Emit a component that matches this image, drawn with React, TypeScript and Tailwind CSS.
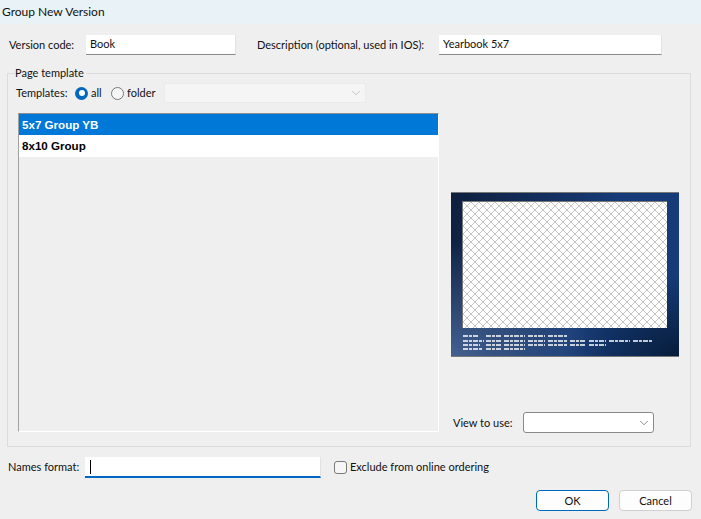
import React from 'react';
import { ChevronDown } from 'lucide-react';

const FONT = "font-['Lato','Open_Sans',sans-serif]";

// fine print under the sample photo: [x, y, width] dashes
const captionLines = [
  [0, 0, 16], [23, 0, 15], [41, 0, 21], [65, 0, 17], [85, 0, 19],
  [0, 5, 21], [23, 5, 15], [41, 5, 21], [65, 5, 17], [85, 5, 19], [107, 5, 16], [126, 5, 17], [146, 5, 21], [170, 5, 19],
  [0, 9, 17], [23, 9, 15], [41, 9, 21], [65, 9, 17], [85, 9, 19], [107, 9, 16], [126, 9, 17],
  [0, 13, 20], [23, 13, 15], [41, 13, 21],
];

function TemplatePreview() {
  return (
    <svg width="228" height="165" viewBox="0 0 228 165" className="block">
      <defs>
        <linearGradient id="bgBase" x1="0" y1="0" x2="1" y2="0.25">
          <stop offset="0" stopColor="#0e1f3e" />
          <stop offset="0.7" stopColor="#163b78" />
          <stop offset="1" stopColor="#163b78" />
        </linearGradient>
        <radialGradient id="glow" cx="0" cy="1" r="0.7">
          <stop offset="0" stopColor="#43608f" />
          <stop offset="1" stopColor="#43608f" stopOpacity="0" />
        </radialGradient>
        <radialGradient id="shade" cx="1" cy="1" r="0.5">
          <stop offset="0" stopColor="#071c3a" />
          <stop offset="1" stopColor="#071c3a" stopOpacity="0" />
        </radialGradient>
        <pattern id="checker" width="8" height="8" patternUnits="userSpaceOnUse" x="12" y="10">
          <rect width="8" height="8" fill="#ffffff" />
          <path d="M0 0L8 8M8 0L0 8" stroke="#c6c6c6" strokeWidth="1" />
        </pattern>
      </defs>
      <rect width="228" height="165" fill="url(#bgBase)" />
      <rect width="228" height="165" fill="url(#glow)" />
      <rect width="228" height="165" fill="url(#shade)" />
      <rect y="0" width="228" height="1" fill="#777777" />
      <rect y="164" width="228" height="1" fill="#777777" />
      <rect x="11" y="9" width="205" height="127" fill="url(#checker)" />
      <rect x="11" y="9" width="205" height="1" fill="#777777" />
      <rect x="11" y="9" width="1" height="127" fill="#777777" />
      <g stroke="#ffffff" strokeWidth="1.5" strokeDasharray="5 1 3 1">
        {captionLines.map(([x, y, w], i) => (
          <line key={i} x1={12 + x} y1={144 + y} x2={12 + x + w} y2={144 + y} />
        ))}
      </g>
    </svg>
  );
}

function TextBox({ value, className }: { value: string; className: string }) {
  return (
    <div className={`h-[20px] bg-white border-b border-b-[#8a8a8a] border-r border-r-[#e2e2e2] pl-[4px] leading-[18px] text-[#111] ${className}`}>
      {value}
    </div>
  );
}

function Radio({ checked, label, className }: { checked?: boolean; label: string; className: string }) {
  return (
    <div className={`flex items-center gap-[3px] ${className}`}>
      {checked ? (
        <span className="w-[13px] h-[13px] rounded-full bg-[#0067c0] flex items-center justify-center">
          <span className="w-[6px] h-[6px] rounded-full bg-white" />
        </span>
      ) : (
        <span className="w-[13px] h-[13px] rounded-full border border-[#7a7a7a] bg-[#f6f6f6]" />
      )}
      <span>{label}</span>
    </div>
  );
}

export default function App() {
  return (
    <div className={`w-[701px] h-[519px] overflow-hidden bg-[#efefef] text-[11px] leading-[16px] text-[#111] whitespace-nowrap ${FONT}`}>
      <div className="h-[24px] bg-[#e9f2f6] pl-[2px] pt-[4px] text-[12px]">Group New Version</div>

      <div className="flex items-center h-[20px] mt-[11px] pl-[9px]">
        <span className="w-[77px]">Version code:</span>
        <TextBox value="Book" className="w-[150px]" />
        <span className="ml-[21px] w-[182px]">Description (optional, used in IOS):</span>
        <TextBox value="Yearbook 5x7" className="w-[223px]" />
      </div>

      <fieldset className="mt-[11px] ml-[7px] w-[684px] h-[381px] border border-[#dcdcdc] px-[7px] pb-[14px] flex flex-col">
        <legend className="pr-[2px] h-[14px] leading-[14px]">Page template</legend>

        <div className="flex items-center h-[20px] mt-[3px] ml-[1px]">
          <span className="w-[59px]">Templates:</span>
          <Radio checked label="all" className="w-[36px]" />
          <Radio label="folder" className="w-[53px]" />
          <div className="w-[202px] h-[20px] bg-[#f5f5f5] border border-[#ebebeb] rounded-[2px] flex items-center justify-end pr-[2px]">
            <ChevronDown className="w-[14px] h-[14px] text-[#b0b0b0]" strokeWidth={1.25} />
          </div>
        </div>

        <div className="flex mt-[10px] ml-[3px] flex-1 min-h-0">
          <div className="w-[421px] border-l border-t border-l-[#a0a0a0] border-t-[#8f8f8f] border-r border-b border-r-white border-b-white font-['Liberation_Sans',sans-serif] font-bold text-[11.6px]">
            <div className="h-[21px] bg-[#0078d7] text-white pl-[3px] leading-[21px]">5x7 Group YB</div>
            <div className="h-[22px] bg-white text-black pl-[3px] leading-[22px]">8x10 Group</div>
          </div>

          <div className="ml-[12px] flex-1 flex flex-col">
            <div className="mt-[79px]">
              <TemplatePreview />
            </div>
            <div className="mt-[55px] ml-[2px] flex items-center">
              <span className="w-[70px]">View to use:</span>
              <div className="w-[131px] h-[21px] bg-white border border-[#8a8a8a] rounded-[3px] flex items-center justify-end pr-[2px]">
                <ChevronDown className="w-[14px] h-[14px] text-[#606060]" strokeWidth={1.25} />
              </div>
            </div>
          </div>
        </div>
      </fieldset>

      <div className="flex items-center mt-[9px] pl-[8px] h-[22px]">
        <span className="w-[77px]">Names format:</span>
        <div className="w-[236px] h-[21px] bg-white border-b-2 border-b-[#0067c0] border-r border-r-[#e2e2e2] pl-[5px] pt-[3px]">
          <div className="w-[1px] h-[14px] bg-black" />
        </div>
        <span className="ml-[13px] w-[13px] h-[13px] rounded-[3px] border border-[#7a7a7a] bg-[#f6f6f6]" />
        <span className="ml-[3px]">Exclude from online ordering</span>
      </div>

      <div className="flex justify-end gap-[10px] mt-[12px] pr-[9px]">
        <button className="w-[73px] h-[21px] bg-[#fdfdfd] border border-[#0067c0] rounded-[4px]">OK</button>
        <button className="w-[73px] h-[21px] bg-[#fdfdfd] border border-[#d0d0d0] rounded-[4px]">Cancel</button>
      </div>
    </div>
  );
}
